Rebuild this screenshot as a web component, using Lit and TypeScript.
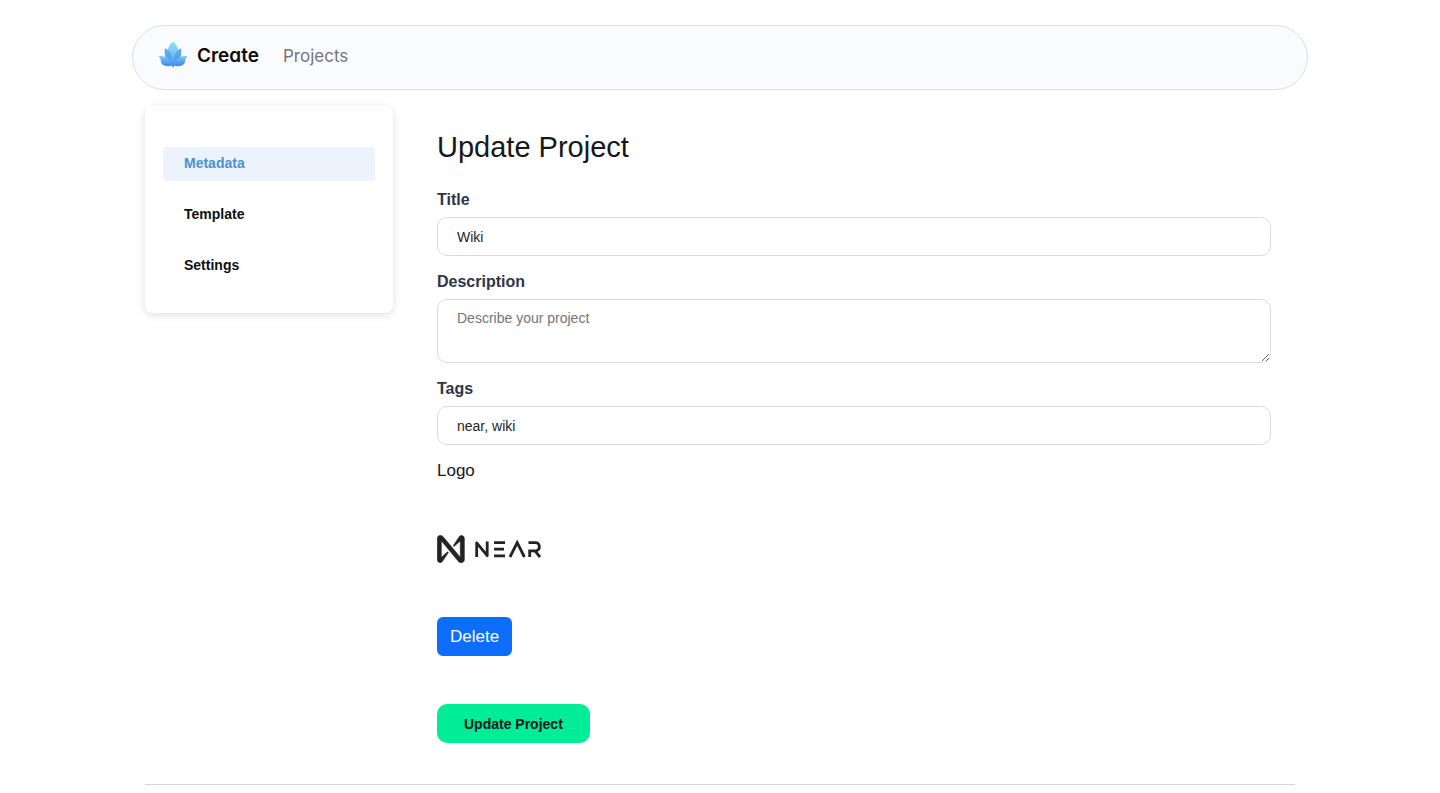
import { LitElement, html, css } from "lit";
import { customElement, state } from "lit/decorators.js";
import { classMap } from "lit/directives/class-map.js";

@customElement("near-logo")
class NearLogo extends LitElement {
  static styles = css`
    :host { display: block; }
    svg { display: block; width: 104px; height: 28px; }
    .mark { fill: #232323; stroke: #232323; stroke-width: 2; }
    .word { fill: none; stroke: #232323; stroke-width: 2.8; }
    .join { stroke-linejoin: round; }
  `;
  render() {
    return html`
      <svg viewBox="0 0 104 28" role="img" aria-label="NEAR">
        <path class="mark" transform="translate(.3 .5) scale(.302)" d="M72.2 4.6L53.3 32.7c-1.3 1.9 1.2 4.2 3 2.6L74.9 19c.5-.4 1.2-.1 1.2.6v50.5c0 .7-.9 1-1.3.5L18.6 3.4C16.7 1.2 14.1 0 11.3 0h-2C4.200 0 0 4.200 0 9.300v71.400C0 85.800 4.200 90 9.300 90c3.200 0 6.200-1.700 7.900-4.400l18.900-28.100c1.300-1.900-1.200-4.200-3-2.600L14.500 71c-.5.4-1.200.1-1.200-.6V19.800c0-.7.9-1 1.300-.5l56.200 67.300c1.900 2.200 4.600 3.400 7.400 3.400h2c5.100 0 9.300-4.200 9.300-9.300V9.300c0-5.100-4.200-9.300-9.400-9.300-3.200 0-6.200 1.700-7.900 4.600z" />
        <path class="word join" d="M39.700 22V7.900L50.200 20.700V6.500" />
        <path class="word" d="M57 7.700H68M57 14.200H67M57 20.800H68M73 22L80.200 7.600L87.400 22" />
        <path class="word" d="M91.500 7.700H99C103.500 7.700 103.500 15.800 99 15.800H92.700V22M98 15.800L103 22" />
      </svg>
    `;
  }
}

@customElement("lotus-icon")
class LotusIcon extends LitElement {
  static styles = css`
    :host { display: block; }
    svg { display: block; width: 30px; height: 28px; }
  `;
  render() {
    return html`
      <svg viewBox="0 0 30 29" aria-hidden="true">
        <defs>
          <linearGradient id="center" x1="0" y1="0" x2="0" y2="1">
            <stop offset="0" stop-color="#93e2f4" /><stop offset=".6" stop-color="#70bef4" /><stop offset="1" stop-color="#4d9df0" />
          </linearGradient>
          <linearGradient id="side" x1="0" y1="0" x2="0" y2="1">
            <stop offset="0" stop-color="#5fb4ea" /><stop offset="1" stop-color="#4a94ea" />
          </linearGradient>
          <linearGradient id="low" x1="0" y1="0" x2="0" y2="1">
            <stop offset="0" stop-color="#79c8f7" /><stop offset="1" stop-color="#3f87ec" />
          </linearGradient>
        </defs>
        <path fill="url(#center)" d="M15 -1C19 3 21.500 8 21 13C20.500 18 18 22 15 25C12 22 9.500 18 9 13C8.500 8 11 3 15 -1Z" />
        <path fill="url(#side)" d="M6.500 6.500C10 8 13 11 14 15L15 25C9 22 5.500 15 6.500 6.500ZM23.500 6.500C20 8 17 11 16 15L15 25C21 22 24.500 15 23.500 6.500Z" />
        <path fill="url(#low)" d="M0 14.500C7 14 13 17 14.700 24C8 26.500 2.500 24 2.500 20C2.500 18 1.500 16 0 14.500ZM30 14.500C23 14 17 17 15.300 24C22 26.500 27.500 24 27.500 20C27.500 18 28.500 16 30 14.500Z" />
        <path fill="#4388e0" d="M14.300 22H15.700V26.500H14.300Z" />
      </svg>
    `;
  }
}

@customElement("app-root")
class AppRoot extends LitElement {
  @state() private section = "Metadata";

  static styles = css`
    :host {
      display: block;
      box-sizing: border-box;
      padding: 25px 24px 8px;
      background: #fff;
      color: #16181b;
      font-family: "Liberation Sans", Arial, sans-serif;
      font-size: 17px;
      line-height: 24px;
    }
    *, *::before, *::after { box-sizing: border-box; }
    .page { max-width: 1176px; margin: 0 auto; }
    .navbar {
      display: flex;
      align-items: center;
      gap: 24px;
      min-height: 65px;
      padding: 0 25px 4px;
      border: 1px solid #dcdee6;
      border-radius: 33px;
      background: #fafbff;
      font-family: Inter, "Liberation Sans", sans-serif;
    }
    .brand {
      display: flex;
      align-items: center;
      gap: 9px;
      color: #0c0c0c;
      font-size: 19px;
      font-weight: 600;
      font-feature-settings: "cv11";
      text-decoration: none;
    }
    .nav-link { color: #747678; font-size: 17px; text-decoration: none; }
    .layout {
      display: grid;
      grid-template-columns: 248px minmax(0, 1fr);
      align-items: start;
      margin: 16px 13px 0;
      padding-bottom: 41px;
      border-bottom: 1px solid #d4d6d8;
    }
    .sidebar {
      display: flex;
      flex-direction: column;
      gap: 17px;
      padding: 41px 18px 30px;
      border-radius: 8px;
      background: #fff;
      box-shadow: 0 2px 8px rgba(0, 0, 0, 0.13);
    }
    .tab {
      height: 34px;
      padding: 0 21px 2px;
      border: 0;
      border-radius: 4px;
      background: none;
      color: #0e0f10;
      font: bold 14px/20px "Liberation Sans", Arial, sans-serif;
      text-align: left;
      cursor: pointer;
    }
    .tab.active { background: #ecf3fc; color: #4c92d2; }
    .content { padding: 23px 24px 0 44px; }
    h1 { margin: 0 0 23px; font-size: 29px; font-weight: 400; line-height: 36px; }
    .field { display: flex; flex-direction: column; gap: 5px; margin-bottom: 14px; }
    .field label { color: #2f3547; font-size: 16px; font-weight: bold; }
    .control {
      display: block;
      width: 100%;
      height: 39px;
      margin: 0;
      padding: 8px 19px;
      border: 1px solid #d9dbdd;
      border-radius: 10px;
      background: #fff;
      color: #222426;
      font: 14px/20px "Liberation Sans", Arial, sans-serif;
    }
    textarea.control { height: 64px; resize: vertical; }
    .control::placeholder { color: #757575; opacity: 1; }
    .logo-label { margin: 0; }
    near-logo { margin: 52px 0 54px; }
    .btn { display: block; height: 39px; border: 0; cursor: pointer; }
    .delete {
      padding: 0 13px;
      border-radius: 6px;
      background: #0d6efd;
      color: #fff;
      font: 17px/24px "Liberation Sans", Arial, sans-serif;
    }
    .update {
      margin-top: 48px;
      padding: 0 27px;
      border-radius: 10px;
      background: #00ec97;
      color: #11181c;
      font: bold 14px/20px "Liberation Sans", Arial, sans-serif;
    }
  `;

  render() {
    return html`
      <div class="page">
        <nav class="navbar">
          <a class="brand" href="#"><lotus-icon></lotus-icon><span>Create</span></a>
          <a class="nav-link" href="#projects">Projects</a>
        </nav>
        <div class="layout">
          <aside class="sidebar">
            ${["Metadata", "Template", "Settings"].map(
              (name) => html`<button
                type="button"
                class=${classMap({ tab: true, active: name === this.section })}
                @click=${() => (this.section = name)}
              >${name}</button>`
            )}
          </aside>
          <main class="content">
            <h1>Update Project</h1>
            <form @submit=${(e: Event) => e.preventDefault()}>
              <div class="field">
                <label for="title">Title</label>
                <input class="control" id="title" type="text" value="Wiki" />
              </div>
              <div class="field">
                <label for="description">Description</label>
                <textarea class="control" id="description" placeholder="Describe your project"></textarea>
              </div>
              <div class="field">
                <label for="tags">Tags</label>
                <input class="control" id="tags" type="text" value="near, wiki" />
              </div>
              <p class="logo-label">Logo</p>
              <near-logo></near-logo>
              <button class="btn delete" type="button">Delete</button>
              <button class="btn update" type="submit">Update Project</button>
            </form>
          </main>
        </div>
      </div>
    `;
  }
}
